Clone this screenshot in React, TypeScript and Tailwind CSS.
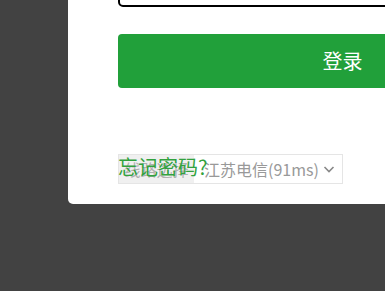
import React from "react";

export default function App() {
  return (
    <div
      className="w-[385px] h-[291px] bg-[#424242] overflow-hidden"
      style={{ fontFamily: '"Microsoft YaHei", "Noto Sans CJK SC", sans-serif' }}
    >
      <div className="ml-[68px] mt-[-40px] w-[520px] bg-white rounded-b-[5px] pl-[50px] pb-[20px]">
        <div className="w-[449px] h-[47px] border-2 border-black rounded-[5px]" />
        <button className="mt-[27px] w-[449px] h-[54px] bg-[#21a03a] rounded-[4px] text-white text-[20px] flex items-center justify-center">
          登录
        </button>
        <div className="relative mt-[66px] w-[225px] h-[30px] border border-[#e5e5e5] flex items-stretch">
          <div className="w-[75px] bg-[#f0f0f0] flex items-center justify-center text-[16px] text-[#b0b0b0]">
            线路选择
          </div>
          <div className="flex-1 flex items-center justify-between pl-[10px] pr-[6px] text-[16px] text-[#999]">
            <span>江苏电信(91ms)</span>
            <svg width="14" height="14" viewBox="0 0 14 14" fill="none">
              <path d="M2.5 5l4.5 4.5L11.5 5" stroke="#888" strokeWidth="1.6" />
            </svg>
          </div>
          <div className="absolute left-[-1px] top-[-2px] text-[20px] leading-[28px] text-[#32a23e]">
            忘记密码?
          </div>
        </div>
      </div>
    </div>
  );
}
